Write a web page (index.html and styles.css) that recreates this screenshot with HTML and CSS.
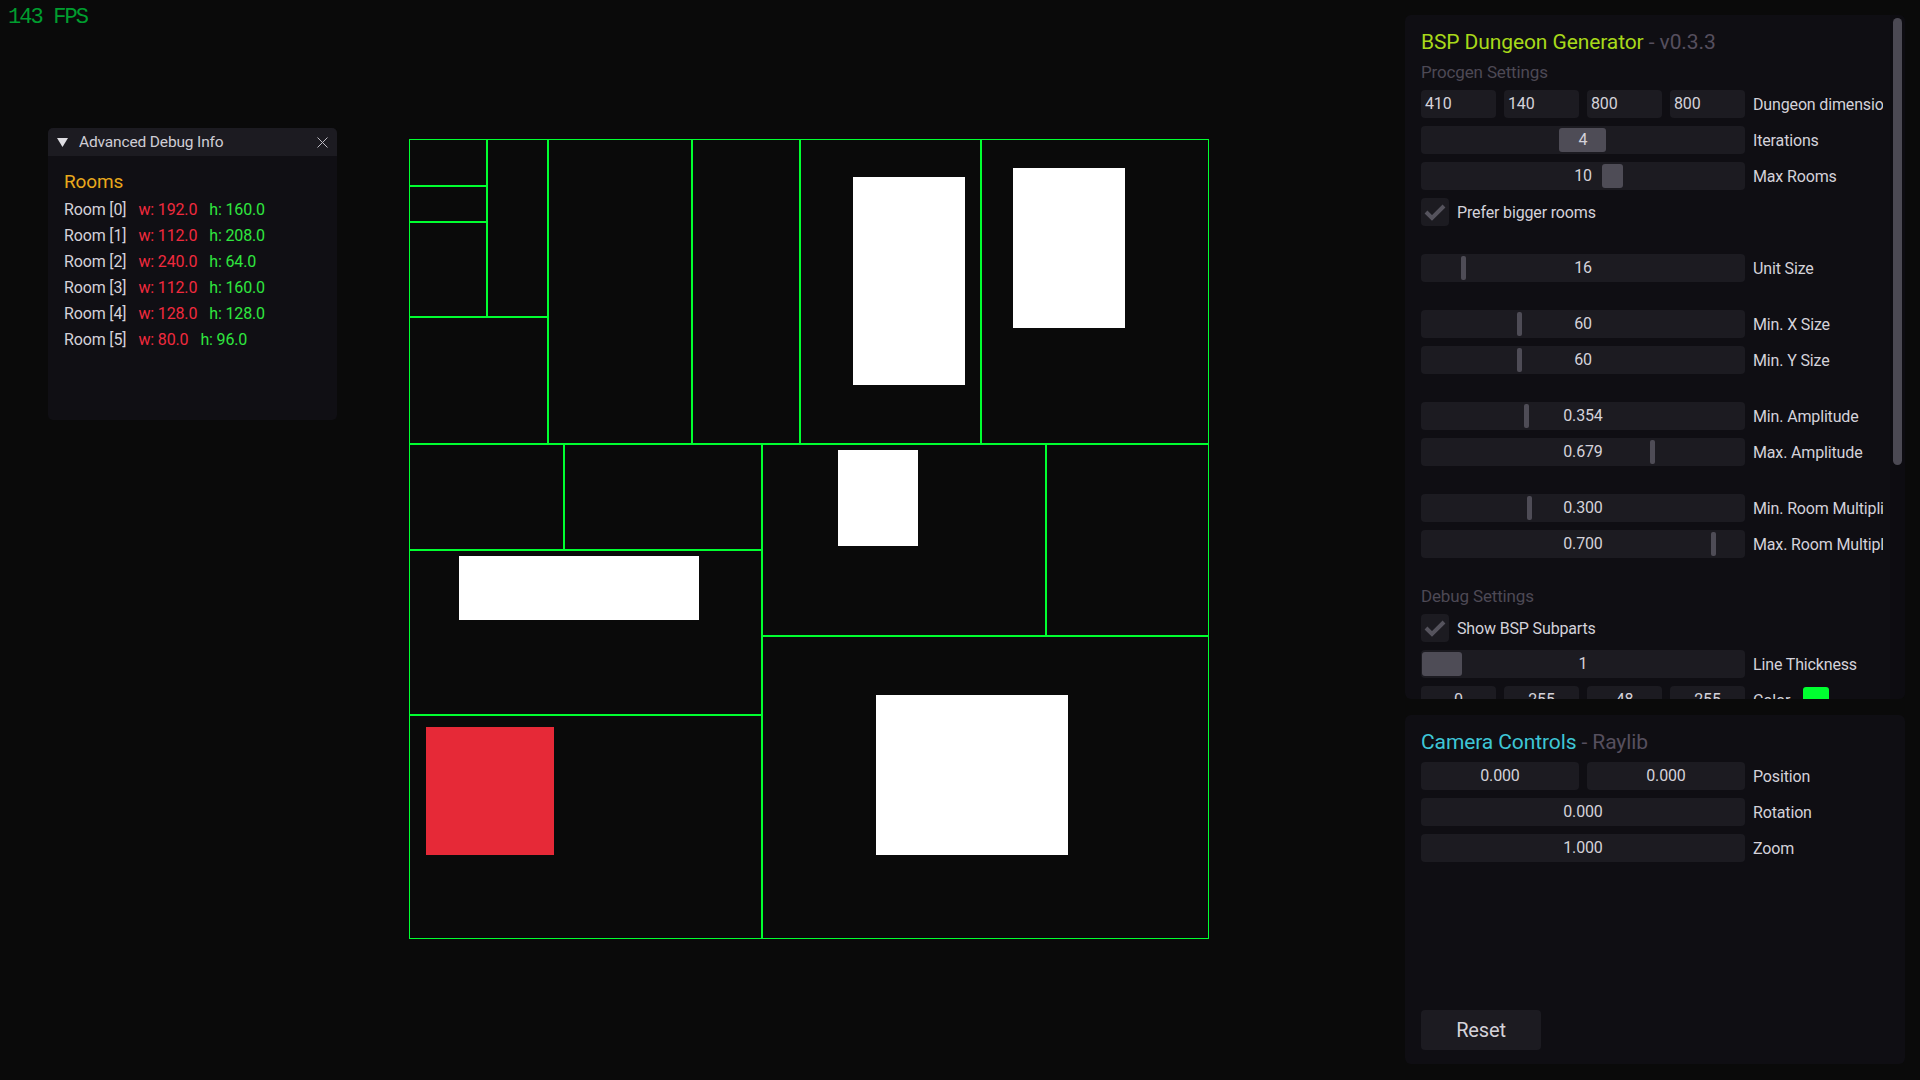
FILE: index.html
```html
<!DOCTYPE html>
<html lang="en">
<head>
<meta charset="utf-8">
<title>BSP Dungeon Generator</title>
<link rel="stylesheet" href="styles.css">
</head>
<body>
<div class="fps">143 FPS</div>

<svg class="dungeon" width="800" height="800" viewBox="0 0 800 800" shape-rendering="crispEdges">
  <g class="rooms">
    <rect x="444" y="38" width="112" height="208" fill="#ffffff"/>
    <rect x="604" y="29" width="112" height="160" fill="#ffffff"/>
    <rect x="429" y="311" width="80" height="96" fill="#ffffff"/>
    <rect x="50" y="417" width="240" height="64" fill="#ffffff"/>
    <rect x="17" y="588" width="128" height="128" fill="#e62937"/>
    <rect x="467" y="556" width="192" height="160" fill="#ffffff"/>
  </g>
  <rect x="0.5" y="0.5" width="799" height="799" fill="none" stroke="#00ff30" stroke-width="1"/>
  <g class="bsp" fill="#00ff30">
    <rect x="77" y="0" width="2" height="179"/>
    <rect x="138" y="0" width="2" height="306"/>
    <rect x="282" y="0" width="2" height="306"/>
    <rect x="390" y="0" width="2" height="306"/>
    <rect x="571" y="0" width="2" height="306"/>
    <rect x="0" y="46" width="79" height="2"/>
    <rect x="0" y="82" width="79" height="2"/>
    <rect x="0" y="177" width="140" height="2"/>
    <rect x="0" y="304" width="800" height="2"/>
    <rect x="352" y="304" width="2" height="496"/>
    <rect x="154" y="304" width="2" height="108"/>
    <rect x="0" y="410" width="354" height="2"/>
    <rect x="0" y="575" width="354" height="2"/>
    <rect x="352" y="496" width="448" height="2"/>
    <rect x="636" y="304" width="2" height="194"/>
  </g>
</svg>

<div class="win">
  <div class="win-title">
    <svg class="collapse" width="11" height="9" viewBox="0 0 11 9"><polygon points="0,0 11,0 5.5,9"/></svg>
    <span class="win-title-text">Advanced Debug Info</span>
    <svg class="close" width="11" height="11" viewBox="0 0 11 11"><path d="M0.5 0.5 L10.5 10.5 M10.5 0.5 L0.5 10.5"/></svg>
  </div>
  <div class="win-body">
    <div class="rooms-heading">Rooms</div>
    <div class="room-list">
      <div class="room-row"><span>Room [0]</span><span class="room-w">w: 192.0</span><span class="room-h">h: 160.0</span></div>
      <div class="room-row"><span>Room [1]</span><span class="room-w">w: 112.0</span><span class="room-h">h: 208.0</span></div>
      <div class="room-row"><span>Room [2]</span><span class="room-w">w: 240.0</span><span class="room-h">h: 64.0</span></div>
      <div class="room-row"><span>Room [3]</span><span class="room-w">w: 112.0</span><span class="room-h">h: 160.0</span></div>
      <div class="room-row"><span>Room [4]</span><span class="room-w">w: 128.0</span><span class="room-h">h: 128.0</span></div>
      <div class="room-row"><span>Room [5]</span><span class="room-w">w: 80.0</span><span class="room-h">h: 96.0</span></div>
    </div>
  </div>
</div>

<div class="side">
  <section class="panel panel-gen">
    <div class="scroll-track"><div class="scroll-grab"></div></div>
    <div class="panel-content">
      <div class="panel-title"><span class="title-gen">BSP Dungeon Generator</span><span class="title-sub"> - v0.3.3</span></div>
      <div class="section-label">Procgen Settings</div>

      <div class="row">
        <div class="widget fields">
          <div class="frame field">410</div>
          <div class="frame field">140</div>
          <div class="frame field">800</div>
          <div class="frame field">800</div>
        </div>
        <div class="label">Dungeon dimensions</div>
      </div>
      <div class="row">
        <div class="widget frame slider"><span class="grab" style="left:138px;width:47px"></span><span class="val">4</span></div>
        <div class="label">Iterations</div>
      </div>
      <div class="row">
        <div class="widget frame slider"><span class="grab" style="left:181px;width:21px"></span><span class="val">10</span></div>
        <div class="label">Max Rooms</div>
      </div>
      <div class="row">
        <div class="check frame"><svg width="28" height="28" viewBox="0 0 28 28"><polyline points="5,14 11,20 23,8"/></svg></div>
        <div class="check-label">Prefer bigger rooms</div>
      </div>

      <div class="spacer"></div>
      <div class="row">
        <div class="widget frame slider"><span class="grab thin" style="left:40px"></span><span class="val">16</span></div>
        <div class="label">Unit Size</div>
      </div>

      <div class="spacer"></div>
      <div class="row">
        <div class="widget frame slider"><span class="grab thin" style="left:96px"></span><span class="val">60</span></div>
        <div class="label">Min. X Size</div>
      </div>
      <div class="row">
        <div class="widget frame slider"><span class="grab thin" style="left:96px"></span><span class="val">60</span></div>
        <div class="label">Min. Y Size</div>
      </div>

      <div class="spacer"></div>
      <div class="row">
        <div class="widget frame slider"><span class="grab thin" style="left:103px"></span><span class="val">0.354</span></div>
        <div class="label">Min. Amplitude</div>
      </div>
      <div class="row">
        <div class="widget frame slider"><span class="grab thin" style="left:229px"></span><span class="val">0.679</span></div>
        <div class="label">Max. Amplitude</div>
      </div>

      <div class="spacer"></div>
      <div class="row">
        <div class="widget frame slider"><span class="grab thin" style="left:106px"></span><span class="val">0.300</span></div>
        <div class="label">Min. Room Multiplier</div>
      </div>
      <div class="row">
        <div class="widget frame slider"><span class="grab thin" style="left:290px"></span><span class="val">0.700</span></div>
        <div class="label">Max. Room Multiplier</div>
      </div>

      <div class="spacer"></div>
      <div class="section-label">Debug Settings</div>
      <div class="row">
        <div class="check frame"><svg width="28" height="28" viewBox="0 0 28 28"><polyline points="5,14 11,20 23,8"/></svg></div>
        <div class="check-label">Show BSP Subparts</div>
      </div>
      <div class="row">
        <div class="widget frame slider"><span class="grab" style="left:1px;width:40px"></span><span class="val">1</span></div>
        <div class="label">Line Thickness</div>
      </div>
      <div class="row">
        <div class="widget fields">
          <div class="frame field center">0</div>
          <div class="frame field center">255</div>
          <div class="frame field center">48</div>
          <div class="frame field center">255</div>
        </div>
        <div class="label color-label"><span>Color</span><span class="swatch"></span></div>
      </div>
    </div>
  </section>

  <section class="panel panel-cam">
    <div class="panel-title"><span class="title-cam">Camera Controls</span><span class="title-sub"> - Raylib</span></div>
    <div class="row">
      <div class="widget fields">
        <div class="frame field center">0.000</div>
        <div class="frame field center">0.000</div>
      </div>
      <div class="label">Position</div>
    </div>
    <div class="row">
      <div class="widget frame slider"><span class="val">0.000</span></div>
      <div class="label">Rotation</div>
    </div>
    <div class="row">
      <div class="widget frame slider"><span class="val">1.000</span></div>
      <div class="label">Zoom</div>
    </div>
    <div class="reset">Reset</div>
  </section>
</div>
</body>
</html>
```

FILE: styles.css
```css
* { box-sizing: border-box; }

html, body {
  margin: 0;
  padding: 0;
}

body {
  width: 1920px;
  height: 1080px;
  overflow: hidden;
  position: relative;
  background: #0a0a0a;
  font-family: Roboto, "Noto Sans", sans-serif;
  font-size: 16px;
  letter-spacing: -0.15px;
  color: #d4d2da;
}

.fps {
  position: absolute;
  left: 8px;
  top: 7px;
  font-family: "Liberation Mono", "DejaVu Sans Mono", monospace;
  font-size: 22px;
  line-height: 22px;
  letter-spacing: -1.9px;
  color: #009e2f;
}

.dungeon {
  position: absolute;
  left: 409px;
  top: 139px;
  display: block;
}

/* Debug window */
.win {
  position: absolute;
  left: 48px;
  top: 128px;
  width: 289px;
  height: 292px;
  background: #100f14;
  border-radius: 5px;
  overflow: hidden;
}

.win-title {
  height: 28px;
  background: #1c1b21;
  display: flex;
  align-items: center;
  padding: 0 9px;
}

.collapse {
  fill: #dedde2;
  margin-right: 11px;
  flex: none;
}

.win-title-text {
  flex: 1;
  font-size: 15.5px;
  color: #cfcdd5;
}

.close {
  stroke: #bdbbc3;
  stroke-width: 1;
  fill: none;
  flex: none;
}

.win-body {
  padding: 15px 16px;
}

.rooms-heading {
  font-size: 19px;
  line-height: 22px;
  color: #e8a81c;
  margin-bottom: 7px;
}

.room-list {
  display: flex;
  flex-direction: column;
  gap: 6px;
}

.room-row {
  display: flex;
  gap: 12px;
  line-height: 20px;
  white-space: nowrap;
}

.room-w { color: #f02a3e; }
.room-h { color: #2fe63f; }

/* Right side panels */
.side {
  position: absolute;
  left: 1405px;
  top: 15px;
  width: 500px;
  display: flex;
  flex-direction: column;
  gap: 16px;
}

.panel {
  background: #0f0e13;
  border-radius: 6px;
  position: relative;
  overflow: hidden;
}

.panel-gen {
  height: 684px;
}

.panel-cam {
  height: 349px;
  display: flex;
  flex-direction: column;
  gap: 8px;
  padding: 15px 16px 14px;
}

.panel-content {
  padding: 15px 0 0 16px;
  display: flex;
  flex-direction: column;
  gap: 8px;
}

.scroll-track {
  position: absolute;
  top: 0;
  right: 0;
  width: 15px;
  height: 100%;
  background: #0d0c11;
}

.scroll-grab {
  position: absolute;
  top: 3px;
  right: 3px;
  width: 9px;
  height: 447px;
  background: #4b4953;
  border-radius: 5px;
}

.panel-title {
  font-size: 21px;
  line-height: 24px;
  letter-spacing: -0.1px;
  white-space: nowrap;
}

.title-gen { color: #a8d91a; }
.title-cam { color: #3ec6d6; }
.title-sub { color: #564f5e; }

.section-label {
  font-size: 17px;
  line-height: 20px;
  color: #4d4955;
}

.spacer {
  height: 12px;
}

.row {
  display: flex;
  align-items: center;
  height: 28px;
}

.widget {
  width: 324px;
  height: 28px;
  flex: none;
}

.frame {
  background: #1c1b21;
  border-radius: 4px;
  height: 28px;
  line-height: 28px;
  white-space: nowrap;
}

.fields {
  display: flex;
  gap: 8px;
}

.field {
  flex: 1;
  padding-left: 4px;
}

.field.center {
  text-align: center;
  padding-left: 0;
}

.slider {
  position: relative;
  text-align: center;
}

.grab {
  position: absolute;
  top: 2px;
  height: 24px;
  background: #4e4c56;
  border-radius: 3px;
}

.grab.thin {
  width: 5px;
  border-radius: 2px;
}

.val {
  position: relative;
}

.label {
  margin-left: 8px;
  width: 130px;
  overflow: hidden;
  white-space: nowrap;
}

.color-label {
  display: flex;
  align-items: center;
}

.swatch {
  width: 26px;
  height: 26px;
  margin-left: 13px;
  background: #00ff30;
  border-radius: 3px;
  flex: none;
}

.check {
  width: 28px;
  flex: none;
}

.check svg {
  display: block;
  fill: none;
  stroke: #55535d;
  stroke-width: 4;
}

.check-label {
  margin-left: 8px;
  white-space: nowrap;
}

.reset {
  margin-top: auto;
  width: 120px;
  height: 40px;
  background: #1c1b21;
  border-radius: 4px;
  font-size: 20px;
  line-height: 40px;
  text-align: center;
}
```
